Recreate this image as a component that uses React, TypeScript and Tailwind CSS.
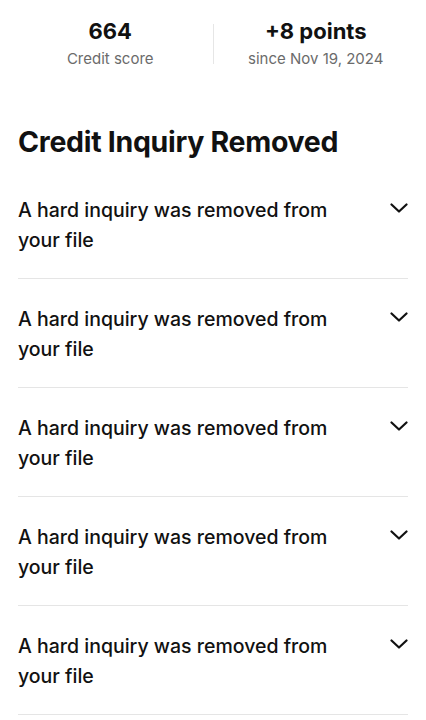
import React from 'react';

const Chevron = () => (
  <svg width="18" height="10" viewBox="0 0 18 10" fill="none" className="mt-[8px] shrink-0">
    <path d="M1.5 1.5L9 8.5L16.5 1.5" stroke="#111" strokeWidth="2.2" strokeLinecap="round" strokeLinejoin="round" />
  </svg>
);

const rows = [1, 2, 3, 4, 5];

export default function App() {
  return (
    <div className="min-h-[720px] bg-white text-[#111] font-['Inter','Noto_Sans',sans-serif]">
      <div className="flex items-stretch px-[8px] pt-[16px]">
        <div className="flex-1 flex flex-col items-center">
          <div className="text-[22px] font-bold leading-[30px]">664</div>
          <div className="text-[15px] leading-[26px] text-[#6b6b6b]">Credit score</div>
        </div>
        <div className="w-px bg-[#e6e6e6] my-[8px]" />
        <div className="flex-1 flex flex-col items-center">
          <div className="text-[22px] font-bold leading-[30px]">+8 points</div>
          <div className="text-[15px] leading-[26px] text-[#6b6b6b]">since Nov 19, 2024</div>
        </div>
      </div>

      <div className="px-[18px]">
        <h1 className="mt-[52px] text-[28.5px] font-bold leading-[36px] tracking-[-0.3px]">Credit Inquiry Removed</h1>
        <div className="mt-[10px]">
          {rows.map((r) => (
            <div key={r} className="flex items-start justify-between pt-[25px] pb-[23px] border-b border-[#e5e5e5]">
              <div className="text-[19.5px] font-medium leading-[30px] w-[320px]">
                A hard inquiry was removed from your file
              </div>
              <Chevron />
            </div>
          ))}
        </div>
      </div>
    </div>
  );
}
